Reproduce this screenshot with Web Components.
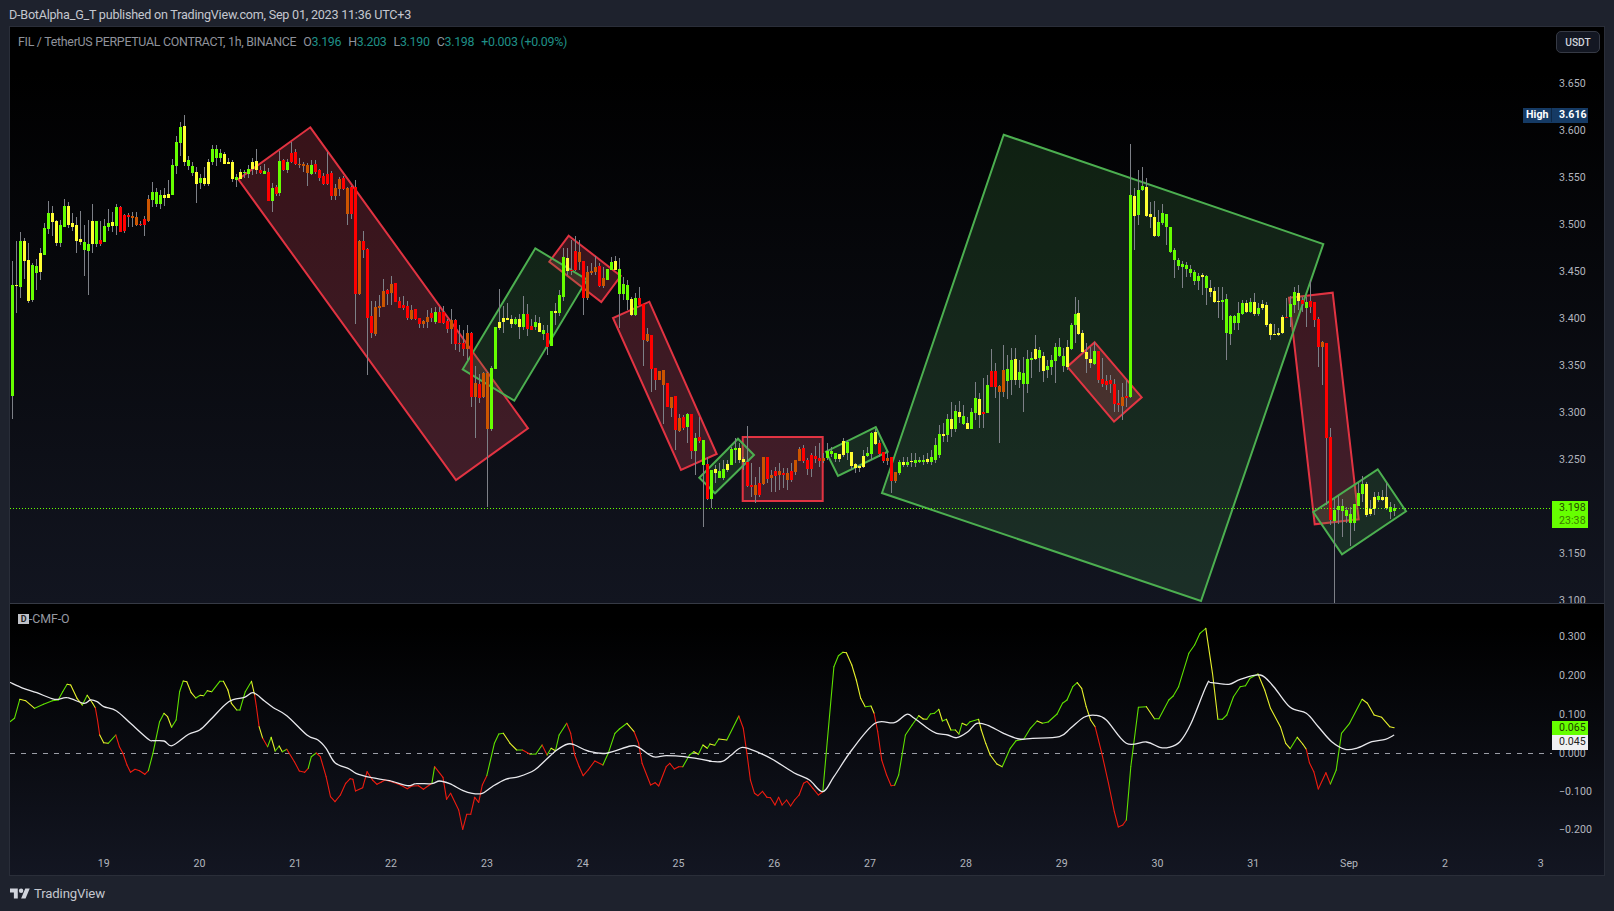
<!DOCTYPE html>
<html>
<head>
<meta charset="utf-8">
<title>FIL chart</title>
<style>
html,body{margin:0;padding:0;background:#1e222d;width:1614px;height:911px;overflow:hidden}
</style>
</head>
<body>
<tv-app>
  <tv-header>D-BotAlpha_G_T published on TradingView.com, Sep 01, 2023 11:36 UTC+3</tv-header>
  <tv-chart>
    <price-pane></price-pane>
    <osc-pane></osc-pane>
  </tv-chart>
  <tv-footer></tv-footer>
</tv-app>
<script>
const FONT = 'Roboto,"Liberation Sans",sans-serif';
const COL = {g:'#66ff00',y:'#ffff33',r:'#ff0000',o:'#cc5500'};
const WICK = '#7d8087';
const X = i => Math.floor(12.33 + i*3.995);

/* candle data: colour,bodyTop,bodyBottom,wickTop,wickBottom in 3x crop rows above y0 */
const SECTIONS = [
[100,`g 555 888 483 957;y 555 557 422 638;g 423 560 395 593;y 423 482 415 537;y 480 602 430 610;g 495 600 490 607;g 498 518 477 570;y 460 515 445 539;g 384 464 370 464;g 339 386 304 402;y 339 366 318 407;y 363 428 360 437;g 375 429 360 440;g 318 380 297 380;y 318 375 306 383;y 369 381 338 393;y 375 422 350 458;y 417 426 333 435;g 426 450 375 527;g 432 453 360 584;y 363 431 312 458;g 363 431 363 440;r 420 431 363 438;g 378 426 358 426;g 369 381 327 392;y 366 378 336 396;g 321 378 312 405;r 321 395 318 395;r 345 393 342 399;r 345 351 340 380;o 348 354 336 380;o 351 375 336 378;r 372 375 362 378;r 357 375 347 408;o 297 362 285 366;g 276 300 246 320;g 276 312 264 320;g 285 312 270 327;y 285 294 264 318;y 282 294 240 294;g 195 285 177 285;g 126 198 108 222;g 81 129 66 168;y 78 186 45 198;g 180 198 168 210;g 198 219 186 228;y 216 252 201 309;g 234 249 222 267;y 234 252 201 258;y 186 252 177 258;g 147 186 135 195;g 147 174 135 198;g 159 174 147 186;y 162 192 156 192;y 186 192 174 192;y 186 237 180 246;g 231 240 222 261;y 216 237 207 237;g 216 219 210 234;g 207 222 195 234;y 186 207 174 225;y 183 210 147 222;r 209 219 198 222;g 213 222 192 222;r 216 303 204 303;g 264 303 249 336;r 261 282 255 288;g 183 279 153 288;r 180 210 177 213;g 186 210 177 219;r 159 186 126 189;r 156 192 147 195`],
[120,`o 133 135 115 143;o 132 138 125 155;o 135 159 129 197;g 135 162 120 165;r 132 156 120 162;r 150 174 147 183;r 168 192 160 195;r 162 192 95 195;r 159 228 153 240;o 204 228 192 240;o 177 207 171 228;r 174 207 168 210;o 204 282 201 315;r 201 282 198 297;r 201 522 180 612;o 363 522 360 525;r 363 390 333 414;r 387 594 384 765;r 588 640 543 654;o 561 642 543 648;o 558 564 525 591;o 513 561 477 561;r 510 522 507 555;o 492 519 468 555;r 489 546 489 546;r 543 564 531 564;r 555 564 528 570;r 558 594 543 600;o 570 597 555 600;r 567 597 567 600;r 594 612 594 624;o 603 612 600 624;o 591 606 570 624;r 579 594 564 606;g 576 606 561 612;r 576 609 561 609;r 576 609 558 612;r 603 627 597 639;o 600 627 567 672;r 600 672 597 690;r 669 672 615 696;r 669 687 630 708;o 639 687 615 720;r 639 831 636 861;o 789 831 738 954;r 792 834 762 849;o 759 831 756 834;o 759 927 756 1160;g 744 927 738 933;g 621 747 621 747;y 606 624 507 630;y 594 606 558 639;y 594 600 549 600;y 597 612 585 624;g 597 612 591 615;y 597 621 582 657;g 582 621 528 630;r 582 627 552 648;r 618 630 597 630;g 606 621 585 630;y 609 636 591 636;g 630 642 615 660;r 639 681 615 705`],
[230,`g 243 348 243 348;y 243 249 218 285;g 195 249 180 258;g 81 201 55 213;y 84 123 55 135;r 120 123 30 135;r 63 120 18 123;o 66 96 30 120;r 93 204 93 255;o 126 204 108 210;o 123 129 100 135;o 111 126 78 135;r 108 168 100 170;o 144 168 110 175;g 117 150 117 150;g 96 120 80 120;y 93 120 78 120;g 117 192 84 295;g 162 192 140 210;g 165 210 150 240;y 207 255 200 258;g 204 255 190 258;r 204 225 172 225;r 222 330 222 408;o 312 333 295 336;r 315 417 315 486;r 414 450 414 480;o 423 450 423 450;o 420 465 420 582;r 459 531 459 531;o 501 534 501 560;r 498 600 498 660;o 564 603 552 606;r 561 594 555 600;g 552 591 549 640;r 552 663 552 688;g 624 663 610 735;r 621 633 560 640;g 630 705 630 890;r 702 807 680 810;g 720 807 720 833;y 717 729 705 760;g 723 744 700 744;g 717 744 690 750;y 702 720 690 725;g 657 705 650 705;g 654 660 625 700;y 654 690 640 700;y 687 696 680 720;r 696 768 588 770;r 765 771 700 800;o 765 795 740 820;r 759 795 710 800;o 681 762 680 765;r 681 747 681 760;o 735 744 720 785;r 723 738 710 785;o 723 735 700 780;r 729 735 715 775;o 729 750 715 780;r 723 750 700 755;o 690 726 690 735;o 657 693 650 693;r 654 693 645 700;r 690 717 685 735;r 675 717 670 740;r 678 687 648 700;r 684 693 640 710;o 684 693 668 700;g 663 684 640 690;g 663 672 650 680;g 669 687 669 695;y 672 687 672 695;y 633 675 625 680;g 636 669 630 690;y 666 708 666 720;y 702 714 700 728;y 708 714 705 725;y 678 711 660 715;g 669 678 650 680;g 609 672 605 690;y 606 642 596 645;r 639 672 630 680;r 666 693 666 700;o 684 693 670 705;r 681 753 681 790;o 726 753 726 760;g 696 729 690 735;y 696 705 680 710;g 696 705 680 710;y 693 696 670 710;g 690 699 670 710;g 690 696 680 700;g 690 696 675 705;y 687 696 670 702;g 681 696 660 705;g 645 690 625 698`],
[130,`g 912 975 885 985;y 912 918 880 935;g 867 915 853 935;y 867 897 815 920;g 843 897 825 905;y 846 861 813 880;g 858 882 825 885;y 879 897 860 898;g 846 897 835 897;g 804 850 755 870;y 807 855 790 895;r 846 852 745 895;g 765 849 735 850;r 723 771 657 772;r 723 771 700 805;o 768 786 765 940;o 720 786 645 800;g 717 753 675 806;g 690 750 655 795;y 687 750 655 765;g 726 750 690 775;g 729 762 680 845;g 687 762 660 790;g 684 690 665 745;y 657 687 615 690;g 660 684 650 725;y 678 723 665 755;g 708 720 690 745;g 690 711 675 735;g 651 693 640 760;g 651 678 625 680;g 678 708 655 725;y 651 711 630 720;g 585 657 580 660;g 552 585 500 640;y 549 612 510 615;y 609 666 600 670;y 666 687 640 730;y 687 699 650 715;g 663 702 635 705;r 663 750 663 760;r 747 762 685 770;r 753 765 735 780;r 750 762 735 790;r 762 822 748 845;r 820 826 780 845;o 801 828 760 870;r 798 805 750 830;g 195 801 42 805;y 198 258 175 360;g 180 255 120 285;g 168 180 110 182;y 171 258 145 262;y 252 261 215 295;y 261 318 212 320;g 276 318 240 320;g 249 279 222 285;g 252 291 252 345;g 291 366 291 370;g 360 390 355 445;g 390 408 385 420;g 402 411 392 473;g 405 417 395 440;g 417 429 405 440;g 426 453 420 465;g 438 453 430 480;y 435 441 430 495;g 438 474 435 525;y 474 486 450 500;y 483 516 470 520;y 513 516 470 565;g 510 516 470 570;g 507 609 492 690;g 558 612 555 645;g 558 579 556 600;g 549 579 515 600;g 519 552 510 555;y 519 546 510 550;g 516 546 505 550;y 516 552 490 558;g 534 552 520 558;y 522 534 510 540;y 525 585 515 590;y 582 615 580 630;y 612 615 582 615;y 609 615 595 618;y 561 609 555 612;r 561 564 505 565;g 522 561 498 590;g 486 525 470 550;y 489 513 465 540;r 510 522 500 545;g 516 534 500 590;r 513 531 450 550;r 516 570 515 590;r 567 651 560 712;o 636 651 632 765;r 639 925 639 1125;r 921 1170 895 1185`],
[440,`g 210 243 178 490;g 198 210 168 252;g 198 213 178 290;g 210 228 200 250;g 222 249 200 318;g 192 249 192 272;g 159 198 130 198;g 132 162 108 185;y 132 225 125 230;y 207 222 180 228;y 171 207 155 225;g 168 180 155 185;y 171 180 150 182;y 171 204 130 210;g 201 216 186 236;g 204 213 192 228`]
];

function candlesSvg(){
  let i=0, wicks='', bodies='';
  for(const [y0,str] of SECTIONS){
    for(const row of str.split(';')){
      const [c,t,b,wt,wb] = row.split(' ');
      const Y = v => Math.round(y0 + (+v)/3);
      const x = X(i);
      const top=Y(t), bot=Math.max(Y(b),top+1);
      wicks += `<rect x="${x}" y="${Y(wt)}" width="1" height="${Math.max(Y(wb)-Y(wt),1)}" fill="${WICK}"/>`;
      bodies += `<rect x="${x-1}" y="${top}" width="3" height="${bot-top}" fill="${COL[c]}"/>`;
      i++;
    }
  }
  return `<g shape-rendering="crispEdges">${wicks}${bodies}</g>`;
}

const SHAPES = [
 ['r','310.3,127.3 528,428.3 456,480 238.3,179.3'],
 ['r','568.7,235.7 620.7,276 601.3,302 549.3,261.7'],
 ['r','649.3,301.7 716.7,454 681,470 613,318'],
 ['r','742.7,437 822.7,437 822.7,501 742.7,501'],
 ['r','1289,297.7 1332.7,292.7 1358.7,519.3 1314.7,524.3'],
 ['g','535.3,248.3 587,279.7 514.3,400.7 462.7,369.3'],
 ['g','738,438.7 754,455 715,493.3 699.3,477.7'],
 ['g','875.7,427 887.7,451.7 838,476 826,451.7'],
 ['g','1003.7,134.7 1323.3,244 1201,601 882,493'],
 ['g','1377.7,469.3 1406,511.3 1342,554.3 1313.3,512'],
 ['r','1094.7,342.3 1141.7,397.3 1114,421.7 1067.3,366.7']
];
function shapesSvg(){
  return SHAPES.map(([c,p])=> c==='r'
    ? `<polygon points="${p}" fill="rgba(255,80,105,.21)" stroke="#f23645" stroke-width="2" stroke-opacity=".92"/>`
    : `<polygon points="${p}" fill="rgba(70,155,75,.2)" stroke="#4caf50" stroke-width="2"/>`).join('');
}

const OSC = [
 [10,'G','0,305 10,295 22,238 35,242 55,265 75,253 95,242 108,240 118,215 128,193 136,195 150,235 162,255 173,226 185,250 191,263'],
 [10,'R','191,263 196,300 201,345'],
 [10,'G','201,345 210,368 220,370 237,345'],
 [10,'R','237,345 245,380 253,400 262,435 270,457 280,448 290,452 302,463 310,452'],
 [10,'G','310,452 320,400 335,305 345,280 353,290 362,322 372,300 380,215 388,183 396,185 406,218 416,234 426,226 434,227 442,212 452,215 470,184 478,184 488,210 496,250 508,270 515,270 527,215 541,184 548,225'],
 [10,'R','548,225 552,260 558,320'],
 [10,'G','558,320 566,355'],
 [10,'R','566,355 577,380'],
 [10,'G','577,380 585,352 594,393 603,378 610,395 620,388'],
 [10,'R','620,388 637,425 648,453 660,457 668,445'],
 [10,'G','668,445 675,410 686,399'],
 [10,'R','686,399 695,410 708,470 718,530 728,545 740,525 752,490 762,476 768,478 774,513 790,503 800,455 812,480 822,493 832,486 840,480 855,485 875,495 890,506 900,498 915,497 926,508 945,490'],
 [10,'G','945,490 951,440'],
 [10,'R','951,440 970,472 978,538 987,520 1005,570 1014,628 1023,583 1032,583 1041,532 1050,547 1058,495 1068,467'],
 [10,'G','1068,467 1085,370 1095,342 1105,340 1120,370 1135,390 1148,390'],
 [10,'R','1148,390 1165,403'],
 [10,'G','1165,403 1178,402 1192,375'],
 [10,'R','1192,375 1203,405'],
 [10,'G','1203,405 1212,385 1222,392 1230,345 1247,310'],
 [10,'R','1247,310 1256,340 1265,405 1275,440 1284,467 1295,450 1310,423 1328,435'],
 [10,'G','1328,435 1340,400 1355,340 1365,327 1382,310 1398,335'],
 [10,'R','1398,335 1408,370 1416,430 1435,495 1445,488 1453,498 1470,440 1478,430 1488,447 1498,440 1507,440'],
 [10,'G','1507,440 1522,405 1532,395 1542,403 1552,375 1562,385 1568,372'],
 [700,'G','22,372 33,376 42,357 60,360 87,288'],
 [700,'R','87,288 97,325 105,400 113,480 122,520 130,527 140,514 150,532 158,533 168,555 176,532 184,555 194,540 203,558 212,540 222,525 232,490 240,484 253,505 265,525 275,515'],
 [700,'G','275,515 300,140 310,107 320,97 328,98 340,135 350,180 360,235 370,260 383,258 390,280'],
 [700,'R','390,280 398,335 407,420 418,465 428,497 436,496'],
 [700,'G','436,496 445,465 460,345 475,315 490,287 500,297 508,298 516,282 525,280 535,268 543,303 552,298 562,330 572,330 580,342 587,310 597,316 605,305 624,298 630,330 640,370 650,405 665,432 677,440 695,385 708,362 725,358 740,325 755,303 767,310 780,306 800,282 812,250 822,240 835,200 845,188 855,205 865,260 875,300 885,320'],
 [700,'R','885,320 900,400 915,490 928,575 937,621 947,615 955,600'],
 [700,'G','955,600 965,440 982,262 1000,260 1018,296 1028,296 1050,240 1060,228 1072,200 1095,100 1108,75 1120,40 1133,25 1148,160 1160,298 1170,298 1180,285 1195,230 1210,200 1222,197 1232,175 1250,162 1265,210 1278,265 1300,320 1312,370 1322,386 1338,352 1350,372 1358,388'],
 [700,'R','1358,388 1365,428 1375,455 1385,507 1402,458 1412,492'],
 [700,'G','1412,492 1425,450 1437,340 1455,310 1483,238 1495,250 1510,285 1527,292 1545,320 1555,323']
];
const SIGNAL = [
 [10,'0,187 30,205 60,218 100,238 128,233 165,250 180,240 195,245 210,260 238,272 270,310 310,358 320,362 345,363 363,377 400,343 425,330 450,298 490,245 525,232 545,218 570,243 590,263 620,287 665,345 690,360 708,385 728,428 760,447 775,460 810,473 850,482 890,497 910,491 945,491 962,483 985,491 1015,512 1035,520 1058,520 1080,500 1110,478 1140,470 1175,450 1200,420 1225,390 1250,372 1265,375 1295,393 1335,400 1390,378 1408,382 1440,410 1470,407 1510,410 1568,423'],
 [700,'22,424 50,424 70,405 95,382 135,400 165,420 210,458 245,480 275,515 300,470 340,390 392,310 435,308 463,283 480,295 510,325 530,340 555,345 575,353 600,335 620,310 645,316 680,340 715,357 745,355 805,350 830,325 860,292 885,286 910,300 955,370 1000,366 1030,382 1050,382 1075,365 1100,310 1135,195 1145,188 1185,193 1210,178 1255,165 1285,200 1322,262 1358,280 1385,320 1415,365 1445,388 1470,385 1505,365 1535,358 1555,345']
];
const pts = (x0,s) => s.split(' ').map(p=>{const [a,b]=p.split(',');return [x0+a/2.24, 620+b/3]});
function smoothPath(p){
  let d=`M${p[0][0].toFixed(1)} ${p[0][1].toFixed(1)}`;
  for(let i=0;i<p.length-1;i++){
    const a=p[Math.max(i-1,0)],b=p[i],c=p[i+1],e=p[Math.min(i+2,p.length-1)];
    const c1=[b[0]+(c[0]-a[0])/6,b[1]+(c[1]-a[1])/6], c2=[c[0]-(e[0]-b[0])/6,c[1]-(e[1]-b[1])/6];
    d+=`C${c1[0].toFixed(1)} ${c1[1].toFixed(1)} ${c2[0].toFixed(1)} ${c2[1].toFixed(1)} ${c[0].toFixed(1)} ${c[1].toFixed(1)}`;
  }
  return d;
}
function oscSvg(){
  let out='';
  for(const [x0,k,s] of OSC){
    const p=pts(x0,s);
    for(let i=1;i<p.length;i++){
      const c = k==='R' ? '#ee1c10' : (p[i][1]>p[i-1][1]+.3 ? '#e6f02c' : '#5fe000');
      out+=`<line x1="${p[i-1][0].toFixed(1)}" y1="${p[i-1][1].toFixed(1)}" x2="${p[i][0].toFixed(1)}" y2="${p[i][1].toFixed(1)}" stroke="${c}" stroke-width="1.1" stroke-linecap="round"/>`;
    }
  }
  const sig = SIGNAL.flatMap(([x0,s])=>pts(x0,s));
  out+=`<path d="${smoothPath(sig)}" fill="none" stroke="#e8e8ec" stroke-width="1.3"/>`;
  return out;
}

const shell = (el,html)=>{ el.attachShadow({mode:'open'}).innerHTML = html; };
const tickCss = `text{font:10.6px ${FONT};fill:#b2b5be;letter-spacing:.05px}`;

class TvApp extends HTMLElement{connectedCallback(){ if(this.shadowRoot)return; shell(this,`<style>
 :host{display:flex;flex-direction:column;width:1614px;height:911px;background:#1e222d}
 </style><slot></slot>`);}}
class TvHeader extends HTMLElement{connectedCallback(){ if(this.shadowRoot)return; shell(this,`<style>
 :host{display:flex;align-items:center;height:26px;padding:3px 0 0 9px;box-sizing:border-box;font:12.6px ${FONT};letter-spacing:-.235px;color:#c4c7cf;flex:none}
 </style><slot></slot>`);}}
class TvChart extends HTMLElement{connectedCallback(){ if(this.shadowRoot)return; shell(this,`<style>
 :host{display:flex;flex-direction:column;flex:none;margin:0 9px;width:1594px;height:848px;border:1px solid #2a2e39;position:relative;background:#000}
 </style><slot></slot>`);}}
class PriceTag extends HTMLElement{connectedCallback(){ if(this.shadowRoot)return; shell(this,`<style>
 :host{position:absolute;display:block;box-sizing:border-box;font:10.6px/14px ${FONT};letter-spacing:.05px}
 </style><slot></slot>`);}}
class ChartLegend extends HTMLElement{connectedCallback(){ if(this.shadowRoot)return; shell(this,`<style>
 :host{position:absolute;left:8px;top:6px;display:flex;font:12.4px/17px ${FONT};letter-spacing:-.28px;color:#8f929b;white-space:nowrap}
 b{font-weight:400;color:#1f8f87}
 i{font-style:normal;margin-left:7px}
 </style><span>FIL / TetherUS PERPETUAL CONTRACT, 1h, BINANCE</span><i>O<b>3.196</b></i><i>H<b>3.203</b></i><i>L<b>3.190</b></i><i>C<b>3.198</b></i><i><b>+0.003 (+0.09%)</b></i>`);}}
class CurrencyBtn extends HTMLElement{connectedCallback(){ if(this.shadowRoot)return; shell(this,`<style>
 :host{position:absolute;right:4px;top:4px;width:44px;height:22px;box-sizing:border-box;display:flex;align-items:center;justify-content:center;background:#131722;border:1px solid #363a45;border-radius:5px;font:500 10.2px ${FONT};color:#d1d4dc}
 </style>USDT`);}}

class PricePane extends HTMLElement{connectedCallback(){ if(this.shadowRoot)return;
  const yP = p => 553.3-(p-3.15)*940;
  let ticks='';
  for(let k=0;k<12;k++){const p=3.65-k*.05; ticks+=`<text x="1559" y="${(yP(p)+4).toFixed(1)}">${p.toFixed(3)}</text>`;}
  shell(this,`<style>
  :host{display:block;position:relative;height:576px;flex:none;background:linear-gradient(#000 0,#000 8%,#121520 100%);border-bottom:1px solid #363a45;overflow:hidden}
  svg{display:block;position:absolute;left:0;top:0}
  ${tickCss}
  .hi{left:1513px;top:81px;width:65px;height:15px;background:#153a64;color:#fff;font-weight:700;display:block}
  .cur{left:1542px;top:474px;width:36px;height:27px;background:#66ff00;color:#254a00;padding:0 0 0 7px;line-height:13.4px}
  .cur em{font-style:normal;display:block;color:#3c7a00}
  </style>
  <svg width="1594" height="576" viewBox="10 27 1594 576">
    ${shapesSvg()}
    ${candlesSvg()}
    <line x1="10" x2="1552" y1="508.5" y2="508.5" stroke="#66ff00" stroke-width="1" stroke-dasharray="1 2" shape-rendering="crispEdges"/>
    ${ticks}
  </svg>
  <chart-legend></chart-legend>
  <currency-btn></currency-btn>
  <price-tag class="hi"><span style="display:inline-block;width:29px;padding-left:3px;box-sizing:border-box;border-right:1px solid #0d2744">High</span><span style="padding-left:7px">3.616</span></price-tag>
  <price-tag class="cur">3.198<em>23:38</em></price-tag>`);
}}
class OscPane extends HTMLElement{connectedCallback(){ if(this.shadowRoot)return;
  let ticks='';
  [[.3,636.3],[.2,675.3],[.1,714.3],[0,752.7],[-.1,791.3],[-.2,829.3]].forEach(([v,y])=>{
    ticks+=`<text x="1559" y="${(y+4).toFixed(1)}">${v<0?'\u2212':''}${Math.abs(v).toFixed(3)}</text>`;
  });
  const days=['19','20','21','22','23','24','25','26','27','28','29','30','31','Sep','2','3'];
  days.forEach((d,i)=>{ticks+=`<text x="${(103.7+i*95.8).toFixed(1)}" y="866.5" text-anchor="middle">${d}</text>`;});
  shell(this,`<style>
  :host{display:block;position:relative;height:271px;flex:none;background:linear-gradient(#000 0,#000 8%,#131622 100%);overflow:hidden}
  svg{display:block;position:absolute;left:0;top:0}
  ${tickCss}
  .name{position:absolute;left:8px;top:8px;display:flex;align-items:center;font:12.4px/14px ${FONT};letter-spacing:-.1px;color:#9598a1}
  .name b{display:inline-block;width:11px;height:10px;background:#c0c2c8;color:#222;font:700 9px/10px ${FONT};text-align:center}
  .a{left:1542px;top:117px;width:36px;height:14px;background:#66ff00;color:#1d3d00;padding-left:7px}
  .b{left:1542px;top:131px;width:36px;height:15px;background:#f0f0f2;color:#222;padding-left:7px}
  </style>
  <svg width="1594" height="271" viewBox="10 604 1594 271">
    <line x1="10" x2="1552" y1="753.5" y2="753.5" stroke="#9a9da6" stroke-width="1" stroke-dasharray="5 6" shape-rendering="crispEdges"/>
    ${oscSvg()}
    ${ticks}
  </svg>
  <div class="name"><b>D</b><span>-CMF-O</span></div>
  <price-tag class="a">0.065</price-tag>
  <price-tag class="b">0.045</price-tag>`);
}}
class TvFooter extends HTMLElement{connectedCallback(){ if(this.shadowRoot)return; shell(this,`<style>
 :host{display:flex;align-items:center;gap:4px;flex:none;height:35px;padding:0 0 0 10px;box-sizing:border-box;font:400 13.2px ${FONT};letter-spacing:-.15px;color:#c4c7cf}
 svg{display:block}
 </style><svg width="20" height="11" viewBox="0 4 36 18" fill="#d1d4dc"><path d="M14 22H7V11H0V4h14v18zM28 22h-8l7.5-18h8L28 22z"/><circle cx="20" cy="8" r="4"/></svg><span>TradingView</span>`);}}

customElements.define('tv-app',TvApp);
customElements.define('tv-header',TvHeader);
customElements.define('tv-chart',TvChart);
customElements.define('price-tag',PriceTag);
customElements.define('chart-legend',ChartLegend);
customElements.define('currency-btn',CurrencyBtn);
customElements.define('price-pane',PricePane);
customElements.define('osc-pane',OscPane);
customElements.define('tv-footer',TvFooter);
</script>
</body>
</html>
